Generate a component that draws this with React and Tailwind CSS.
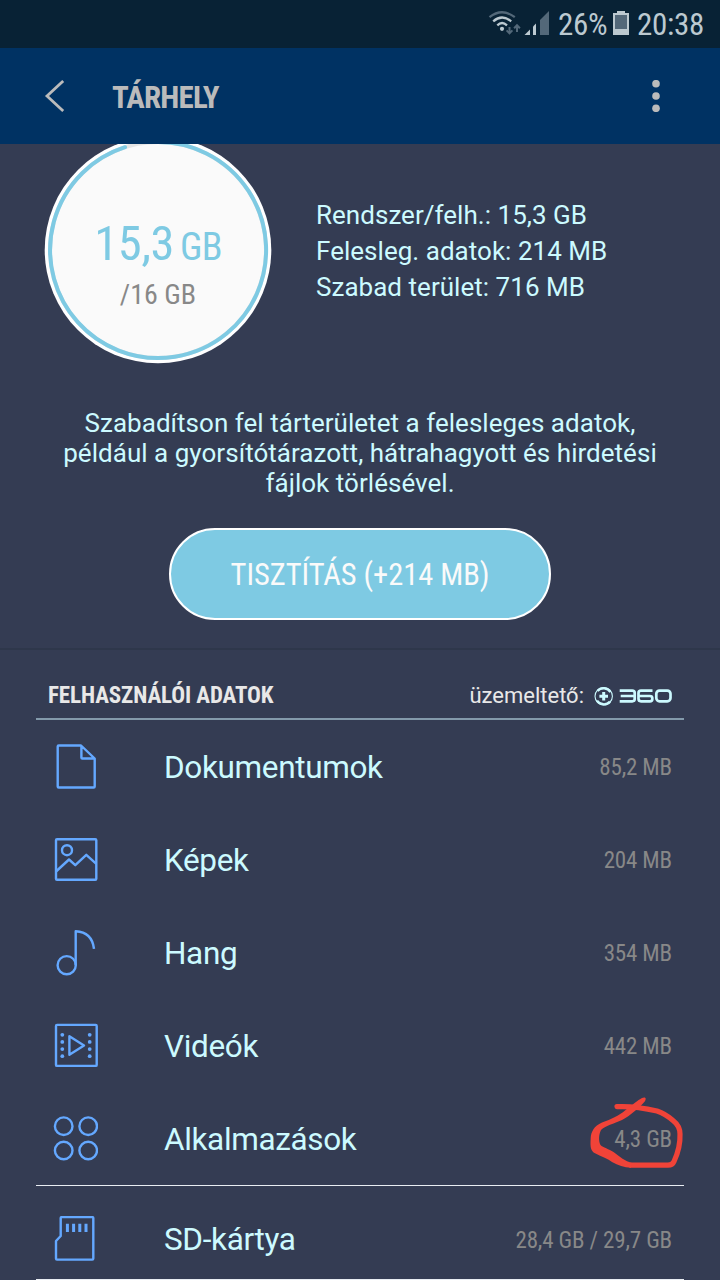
import React from "react";

const COND = "font-['Roboto_Condensed','Roboto',sans-serif] [font-stretch:75%] whitespace-nowrap";

function StatusBar() {
  return (
    <div className={`flex h-12 shrink-0 items-center bg-[#082235] text-[31px] leading-none tracking-[-0.3px] text-[#bcc9d0] ${COND}`}>
      <svg className="ml-[486px] h-12 w-[66px] shrink-0" viewBox="486 0 66 48" fill="none">
        <g strokeWidth="2.3">
          <path d="M489.5 17.2Q502 7.4 514.8 17.2" stroke="#536879" />
          <path d="M493.2 21.3Q502 13.6 511.2 21.3" stroke="#bcc9d0" />
          <path d="M497.3 25.3Q502 20.8 507 25.3" stroke="#bcc9d0" />
        </g>
        <circle cx="502" cy="28.8" r="2.1" fill="#bcc9d0" />
        <path d="M509.5 27V33M506.6 30.4L509.5 33.4L512.4 30.4M517 32V26M514.1 28.2L517 25.2L519.9 28.2" stroke="#536879" strokeWidth="2" />
        <path d="M524.5 35L530 29.5V35Z" fill="#bcc9d0" />
        <path d="M533 35V26.5L536 23.5V35Z" fill="#bcc9d0" />
        <path d="M540 35V20L549 11V35Z" fill="#536879" />
      </svg>
      <span className="ml-[6px] w-[49px]">26%</span>
      <svg className="ml-[6px] h-12 w-4 shrink-0" viewBox="0 0 16 48">
        <path d="M0 13H4V11H12V13H16V35H0Z" fill="#bcc9d0" />
        <path d="M2 15H14V29H2Z" fill="#536879" />
      </svg>
      <span className="ml-2">20:38</span>
    </div>
  );
}

function AppBar() {
  return (
    <div className="flex h-24 shrink-0 items-center bg-[#003263]">
      <svg className="ml-[44px] h-8 w-6" viewBox="0 0 24 32" fill="none" stroke="#bbb" strokeWidth="2.8">
        <path d="M19.2 1L3 16L19.2 31" />
      </svg>
      <h1 className={`ml-[44px] pt-0.5 text-[31px] leading-none font-bold tracking-[-0.8px] text-[#bbb] ${COND}`}>TÁRHELY</h1>
      <svg className="mr-[60px] ml-auto h-8 w-2" viewBox="0 0 8 32" fill="#bbb">
        <circle cx="4" cy="3.7" r="3.8" />
        <circle cx="4" cy="16" r="3.8" />
        <circle cx="4" cy="28.3" r="3.8" />
      </svg>
    </div>
  );
}

function Gauge() {
  return (
    <div className="-mt-2 ml-[44px] grid h-[228px] w-[228px] shrink-0 grid-cols-1 grid-rows-1">
      <svg className="col-start-1 row-start-1 h-[228px] w-[228px]" viewBox="0 0 228 228" fill="none">
        <circle cx="114" cy="114" r="113.3" fill="#fff" />
        <circle cx="114" cy="114" r="108" fill="#fafafa" stroke="#e4e4e4" strokeWidth="4" />
        <path d="M114 6A108 108 0 1 1 81 11.2" stroke="#7ecae3" strokeWidth="4" strokeLinecap="round" />
      </svg>
      <div className={`z-10 col-start-1 row-start-1 flex flex-col items-center pt-[84px] ${COND}`}>
        <div className="flex items-baseline gap-[6px] leading-[48px] text-[#7ecae3]">
          <span className="text-[48.5px] tracking-[-0.4px]">15,3</span>
          <span className="text-[38px] tracking-[-0.8px]">GB</span>
        </div>
        <div className="mt-[8px] text-[28px] leading-[32px] text-[#888]">/16 GB</div>
      </div>
    </div>
  );
}

const icons = {
  doc: <path d="M29 1.5H6.7Q5.7 1.5 5.7 2.5V42.5Q5.7 43.5 6.7 43.5H41.7Q42.7 43.5 42.7 42.5V14.5ZM29.4 1.5V13.7Q29.4 14.5 30.2 14.5H42.7" />,
  image: (
    <>
      <rect x="4" y="2.2" width="40.3" height="40.6" rx="1" />
      <circle cx="15" cy="13.2" r="5" />
      <path d="M4 34.5L17 22.5L23.3 28.2L34.3 17.8L44.3 26.8" />
    </>
  ),
  music: (
    <>
      <circle cx="14.7" cy="35.2" r="9.1" />
      <path d="M23.7 35.2V1.2Q40 2 42 18.8" />
    </>
  ),
  video: (
    <>
      <rect x="4" y="1.9" width="40.7" height="41" rx="1" />
      <path d="M17.4 13.2V31.8L32 22.5Z" />
      <g fill="#64a8ff" stroke="none">
        {[11.8, 18.9, 26.1, 33.2].map((y) => (
          <g key={y}>
            <circle cx="10.3" cy={y} r="1.9" />
            <circle cx="37.7" cy={y} r="1.9" />
          </g>
        ))}
      </g>
    </>
  ),
  apps: (
    <>
      <circle cx="11.7" cy="10.2" r="8.8" />
      <circle cx="36.2" cy="10.2" r="8.8" />
      <circle cx="11.7" cy="34.5" r="8.8" />
      <circle cx="36.2" cy="34.5" r="8.8" />
    </>
  ),
  sd: (
    <>
      <path d="M9.7 1.1H40.3Q41.3 1.1 41.3 2.1V42.6Q41.3 43.6 40.3 43.6H5Q4 43.6 4 42.6V25L8.7 20V2.1Q8.7 1.1 9.7 1.1Z" />
      <path d="M15.4 7.7V16M21.6 7.7V16M27.8 7.7V16M34 7.7V16" strokeWidth="3" />
    </>
  ),
};

function Row({ icon, label, size, className = "" }) {
  return (
    <div className={`flex h-[93px] shrink-0 items-center pr-3 pl-4 ${className}`}>
      <svg className="h-[46px] w-[46px] shrink-0" viewBox="0 0 46 46" fill="none" stroke="#64a8ff" strokeWidth="2.4" strokeLinejoin="round">
        {icons[icon]}
      </svg>
      <span className="ml-[66px] pt-0.5 text-[31.5px] leading-none tracking-[-0.35px] whitespace-nowrap">{label}</span>
      <span className={`ml-auto pt-0.5 text-[23px] leading-none tracking-[-0.15px] text-[#888] ${COND}`}>{size}</span>
    </div>
  );
}

export default function App() {
  return (
    <div className="flex h-[1280px] w-[720px] flex-col overflow-hidden bg-[#343c53] font-['Roboto',sans-serif] text-[#ccfaff]">
      <StatusBar />
      <AppBar />
      <section className="flex h-[506px] shrink-0 flex-col items-center overflow-hidden border-b-2 border-[#2e374b]">
        <div className="flex w-full items-start">
          <Gauge />
          <div className="mt-[53px] ml-11 text-[26px] leading-9 tracking-[0.03px] whitespace-nowrap">
            <div>Rendszer/felh.: 15,3 GB</div>
            <div>Felesleg. adatok: 214 MB</div>
            <div>Szabad terület: 716 MB</div>
          </div>
        </div>
        <p className="mt-[44px] text-center text-[26px] leading-[30px] tracking-[0.03px] whitespace-nowrap">
          Szabadítson fel tárterületet a felesleges adatok,
          <br />
          például a gyorsítótárazott, hátrahagyott és hirdetési
          <br />
          fájlok törlésével.
        </p>
        <button className={`mt-[30px] h-[92px] w-[382px] shrink-0 rounded-full border-2 border-white bg-[#7ecae3] pt-0.5 text-[30.5px] tracking-[-0.05px] text-[#fafafa] ${COND}`}>
          TISZTÍTÁS (+214 MB)
        </button>
      </section>
      <section className="mx-9 flex grow flex-col">
        <div className="flex h-[70px] shrink-0 items-center border-b-2 border-[#839aab] pt-[23px] pr-[11px] pl-3 text-[#e8e8e8]">
          <h2 className={`text-[23px] leading-none font-bold tracking-[-0.1px] ${COND}`}>FELHASZNÁLÓI ADATOK</h2>
          <span className="ml-auto text-[22px] leading-none">üzemeltető:</span>
          <svg className="ml-[9px] h-[22px] w-[80px]" viewBox="0 0 80 22" fill="none" stroke="#ccfaff">
            <circle cx="10.7" cy="11.3" r="8.7" strokeWidth="1.1" />
            <path d="M4.5 6A8.2 8.2 0 0 1 17.5 7M17 16.6A8.2 8.2 0 0 1 4 15.6" strokeWidth="2.4" />
            <path d="M10.7 7V15.6M6.4 11.3H15" strokeWidth="3" />
            <g strokeWidth="2.7">
              <path d="M26.7 5.6H39.2Q41.7 5.6 41.7 7.8V14.1Q41.7 16.3 39.2 16.3H26.7M27.7 11H41.7" />
              <path d="M59.5 5.6H48Q45.5 5.6 45.5 8V13.8Q45.5 16.3 48 16.3H56.8Q59.3 16.3 59.3 14.3V13Q59.3 11 56.8 11H45.5" />
              <rect x="63.3" y="5.6" width="14.2" height="10.7" rx="3.2" />
            </g>
          </svg>
        </div>
        <Row icon="doc" label="Dokumentumok" size="85,2 MB" />
        <Row icon="image" label="Képek" size="204 MB" />
        <Row icon="music" label="Hang" size="354 MB" />
        <Row icon="video" label="Videók" size="442 MB" />
        <div className="relative h-[93px] shrink-0">
          <Row icon="apps" label="Alkalmazások" size="4,3 GB" />
          <svg className="absolute top-0 right-0 h-[93px] w-[100px]" viewBox="584 1092 100 93" fill="none">
            <path
              d="M617 1106.7C630 1106 644 1108 657 1111C663 1113 669 1117 673 1120.5Q680 1126 680 1134C680.5 1146 677 1155 674 1161.5Q672.5 1165.2 668 1165.2H631"
              stroke="#f04338" strokeWidth="5.2" strokeLinecap="round" strokeLinejoin="round"
            />
            <path
              d="M642 1098C638 1100 632 1105 625 1110.5C620 1115 611 1119.5 602 1122.5C594 1126 591 1132 590.7 1138C590 1148 591 1151 595 1153.3C602 1157 608 1159 612 1162C618 1165 624 1167.7 631 1167.8L632 1163C625 1161 620 1157 613.5 1152C609 1149 603 1147.5 600.5 1145C598.5 1141 598.5 1135 601 1130C605 1126 614 1123.5 622 1120C630 1116 640 1107 644.7 1101.5C647 1098 645 1096.5 642 1098Z"
              fill="#f04338"
            />
          </svg>
        </div>
        <div className="h-px shrink-0 bg-[#e8edf2]" />
        <Row icon="sd" label="SD-kártya" size="28,4 GB / 29,7 GB" className="pt-[13px]" />
        <div className="h-px shrink-0 bg-[#e8edf2]" />
      </section>
    </div>
  );
}
